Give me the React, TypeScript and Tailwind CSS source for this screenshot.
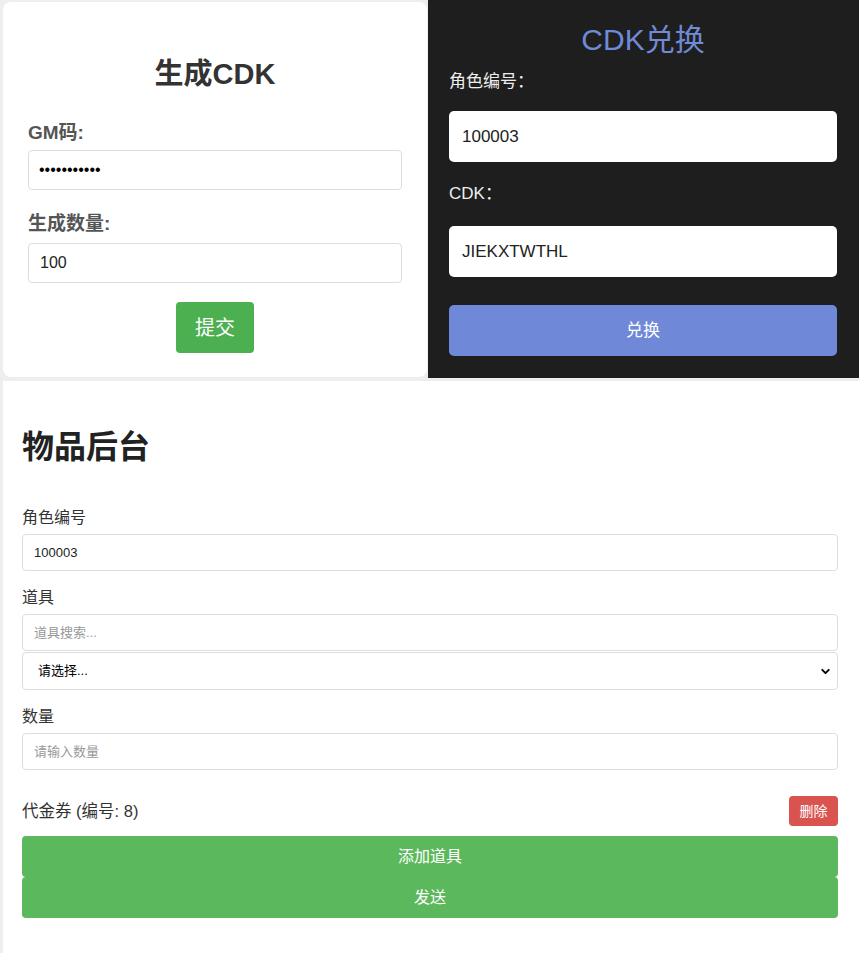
import { ChevronDown } from 'lucide-react';

const font = 'font-["Liberation_Sans","Noto_Sans_CJK_SC",sans-serif]';

function GenerateCard() {
  return (
    <div className="ml-[3px] mt-[2px] mr-[1px] mb-px flex h-[375px] w-[424px] flex-col items-center rounded-lg bg-white px-[25px] pt-[55px]">
      <h2 className="text-[29px] leading-[34px] font-bold text-[#333]">生成CDK</h2>
      <label className="mt-[31px] self-start text-[19px] leading-[22px] font-bold text-[#555]">GM码:</label>
      <input
        type="password"
        defaultValue="12345678901"
        className="mt-[6px] h-[40px] w-full rounded border border-[#ddd] px-[10px] text-[16px] text-black outline-none"
      />
      <label className="mt-[23px] self-start text-[19px] leading-[22px] font-bold text-[#555]">生成数量:</label>
      <input
        defaultValue="100"
        className="mt-[8px] h-[40px] w-full rounded border border-[#ddd] px-[11px] text-[16px] text-[#222] outline-none"
      />
      <button className="mt-[19px] h-[51px] w-[78px] rounded bg-[#4caf50] text-[20px] text-white">提交</button>
    </div>
  );
}

function RedeemPanel() {
  return (
    <div className="flex h-[378px] flex-1 flex-col bg-[#1e1e1e] px-[21px] pt-[22px] pr-[22px]">
      <h2 className="text-center text-[30px] leading-[36px] text-[#6f8ad6]">CDK兑换</h2>
      <label className="mt-[14px] text-[17px] leading-[20px] text-[#eee]">角色编号：</label>
      <input
        defaultValue="100003"
        className="mt-[19px] h-[51px] w-full rounded-[5px] bg-white px-[13px] text-[17px] text-[#222] outline-none"
      />
      <label className="mt-[22px] text-[17px] leading-[20px] text-[#eee]">CDK：</label>
      <input
        defaultValue="JIEKXTWTHL"
        className="mt-[22px] h-[51px] w-full rounded-[5px] bg-white px-[13px] text-[17px] text-[#222] outline-none"
      />
      <button className="mt-[28px] h-[51px] w-full rounded-[5px] bg-[#6f88d8] text-[17px] text-white">兑换</button>
    </div>
  );
}

function ItemAdmin() {
  const field = 'h-[37px] w-full rounded border border-[#ddd] bg-white px-[11px] text-[13px] text-[#222] outline-none placeholder:text-[#999]';
  return (
    <div className="ml-[3px] mt-[3px] flex min-h-[572px] flex-col bg-white pl-[19px] pr-[21px] pt-[47px]">
      <h1 className="text-[32px] leading-[38px] font-bold text-[#222]">物品后台</h1>

      <label className="mt-[42px] text-[16px] leading-[20px] text-[#333]">角色编号</label>
      <input defaultValue="100003" className={`mt-[6px] ${field}`} />

      <label className="mt-[17px] text-[16px] leading-[20px] text-[#333]">道具</label>
      <input placeholder="道具搜索..." className={`mt-[6px] ${field}`} />
      <div className="relative mt-px">
        <select className="h-[38px] w-full appearance-none rounded border border-[#ddd] bg-white pl-[15px] text-[13px] text-black outline-none">
          <option>请选择...</option>
        </select>
        <ChevronDown className="pointer-events-none absolute top-[13px] right-[6px] size-[13px] text-black" strokeWidth={3.5} />
      </div>

      <label className="mt-[17px] text-[16px] leading-[20px] text-[#333]">数量</label>
      <input placeholder="请输入数量" className={`mt-[6px] ${field}`} />

      <div className="mt-[26px] flex h-[30px] items-center justify-between">
        <span className="text-[16.5px] text-[#333]">代金券 (编号: 8)</span>
        <button className="h-[30px] w-[49px] rounded bg-[#d9534f] text-[14px] text-white">删除</button>
      </div>

      <button className="mt-[10px] h-[41px] w-full rounded bg-[#5cb85c] pt-px text-[16px] text-white">添加道具</button>
      <button className="h-[41px] w-full rounded bg-[#5cb85c] pt-px text-[16px] text-white">发送</button>
    </div>
  );
}

export default function App() {
  return (
    <div className={`min-h-[953px] w-[859px] bg-[#eeeeee] ${font}`}>
      <div className="flex">
        <GenerateCard />
        <RedeemPanel />
      </div>
      <ItemAdmin />
    </div>
  );
}
